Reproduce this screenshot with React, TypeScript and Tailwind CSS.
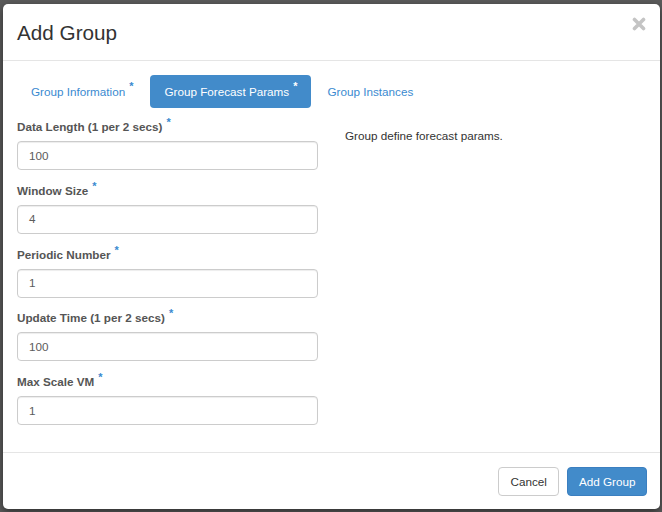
import React from "react";

const fields = [
  { label: "Data Length (1 per 2 secs)", value: "100" },
  { label: "Window Size", value: "4" },
  { label: "Periodic Number", value: "1" },
  { label: "Update Time (1 per 2 secs)", value: "100" },
  { label: "Max Scale VM", value: "1" },
];

function Star({ white }: { white?: boolean }) {
  return (
    <span
      className={`relative -top-[5px] ml-[4px] text-[11px] font-bold ${
        white ? "text-white" : "text-[#3a8ad0]"
      }`}
    >
      *
    </span>
  );
}

export default function App() {
  return (
    <div
      className="h-[512px] w-[662px] overflow-hidden bg-[#5b5b5b] pl-[3px] pt-[4px]"
      style={{ fontFamily: '"Liberation Sans", Arial, sans-serif' }}
    >
      <div className="flex h-[505px] w-[657px] flex-col rounded-[5px] bg-white shadow-[0_3px_9px_rgba(0,0,0,0.5)]">
        {/* header */}
        <div className="flex h-[57px] items-start justify-between border-b border-[#e5e5e5] pl-[14px] pr-[14px]">
          <h4 className="mt-[16px] text-[20.7px] leading-[25px] text-[#333]">Add Group</h4>
          <svg className="mt-[13px]" width="14" height="14" viewBox="0 0 14 14">
            <path
              d="M2.5 2.5 L11.5 11.5 M11.5 2.5 L2.5 11.5"
              stroke="#c4c4c4"
              strokeWidth="3.6"
              strokeLinecap="round"
            />
          </svg>
        </div>

        {/* body */}
        <div className="flex-1 px-[14px] pt-[14px]">
          <div className="flex h-[33px] text-[11.7px]">
            <div className="mr-[3px] flex items-center rounded-[4px] px-[14px] text-[#3a8ad0]">
              Group Information
              <Star />
            </div>
            <div className="mr-[2px] flex items-center rounded-[4px] bg-[#428bca] px-[14px] text-white">
              Group Forecast Params
              <Star white />
            </div>
            <div className="flex items-center rounded-[4px] px-[14px] text-[#3a8ad0]">
              Group Instances
            </div>
          </div>

          <div className="mt-[10px] flex gap-[27px]">
            <div className="w-[301px]">
              {fields.map((f) => (
                <div key={f.label} className="mb-[11.75px]">
                  <div className="mb-[6px] h-[17px] text-[11.7px] font-bold leading-[17px] text-[#555]">
                    {f.label}
                    <Star />
                  </div>
                  <div className="flex h-[29px] items-center rounded-[4px] border border-[#ccc] px-[11px] text-[11.7px] text-[#5c5c5c] shadow-[inset_0_1px_1px_rgba(0,0,0,0.075)]">
                    {f.value}
                  </div>
                </div>
              ))}
            </div>
            <div className="pt-[9px] text-[11.7px] leading-[17px] text-[#333]">
              Group define forecast params.
            </div>
          </div>
        </div>

        {/* footer */}
        <div className="flex h-[57px] items-start justify-end gap-[8px] border-t border-[#e5e5e5] pr-[13px] pt-[14px]">
          <button className="h-[29px] rounded-[4px] border border-[#ccc] bg-white px-[11.5px] text-[11.7px] text-[#333]">
            Cancel
          </button>
          <button className="h-[29px] rounded-[4px] border border-[#3b7fc0] bg-[#428bca] px-[10.5px] text-[11.7px] text-white">
            Add Group
          </button>
        </div>
      </div>
    </div>
  );
}
